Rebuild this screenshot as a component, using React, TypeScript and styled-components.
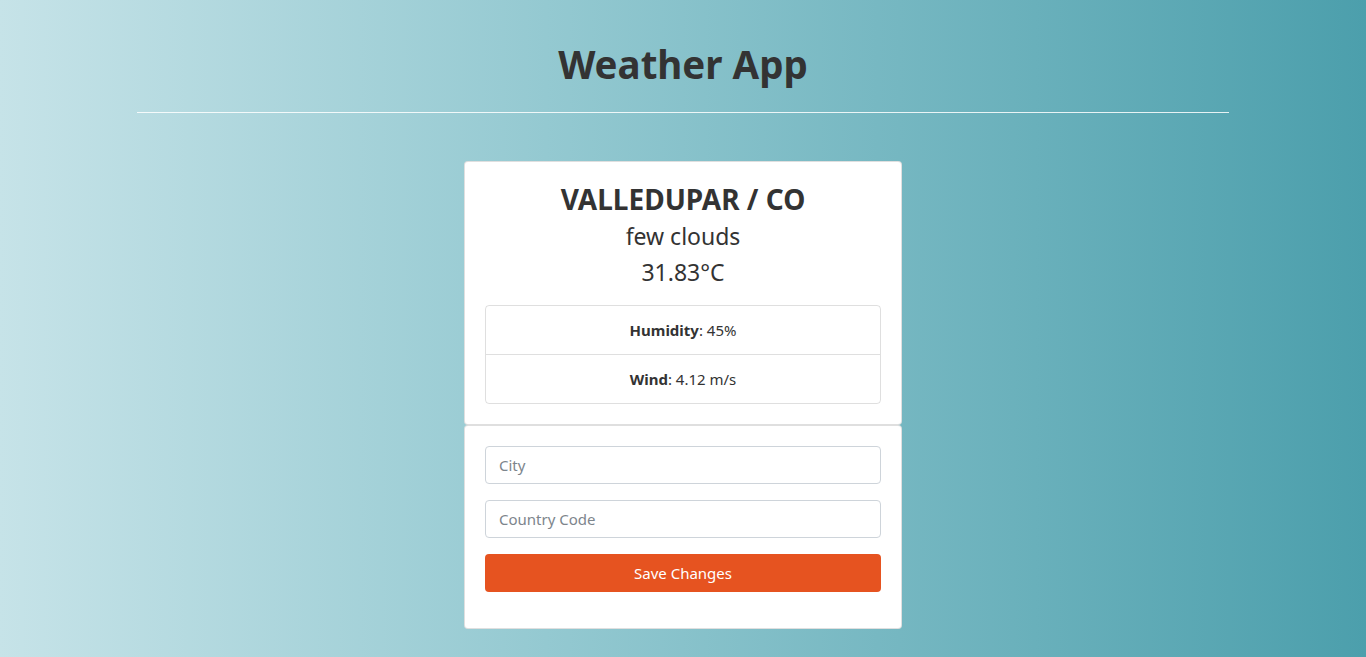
import React from "react";
import styled, { createGlobalStyle } from "styled-components";

const Global = createGlobalStyle`
  * { box-sizing: border-box; }
  body {
    margin: 0;
    font-family: "Noto Sans", "Open Sans", sans-serif;
    color: #333;
  }
`;

const Page = styled.div`
  min-height: 657px;
  background: linear-gradient(to right, #c6e3e8 0%, #94c9d1 40%, #4c9fac 100%);
  padding-top: 40px;
  padding-bottom: 28px;
`;

const Container = styled.div`
  width: 1092px;
  margin: 0 auto;
`;

const Title = styled.h1`
  margin: 0 0 8px;
  font-size: 38.5px;
  line-height: 48px;
  font-weight: 700;
  text-align: center;
  color: #333;
`;

const Rule = styled.hr`
  margin: 24px 0 48px;
  border: 0;
  border-top: 1px solid rgba(255, 255, 255, 0.85);
`;

const Column = styled.div`
  width: 438px;
  margin: 0 auto;
  display: flex;
  flex-direction: column;
`;

const Card = styled.div`
  background: #fff;
  border: 1px solid rgba(0, 0, 0, 0.125);
  border-radius: 4px;
  padding: 20px;
`;

const City = styled.h3`
  margin: 0 0 4px;
  font-size: 28px;
  line-height: 34px;
  font-weight: 700;
  text-align: center;
  color: #333;
`;

const Line = styled.p<{ $mb: number }>`
  margin: 0 0 ${(p) => p.$mb}px;
  font-size: 23px;
  line-height: 32px;
  text-align: center;
  color: #333;
`;

const List = styled.ul`
  list-style: none;
  margin: 0;
  padding: 0;
  border: 1px solid rgba(0, 0, 0, 0.125);
  border-radius: 4px;
`;

const Item = styled.li`
  padding: 12px 20px;
  font-size: 15px;
  line-height: 24px;
  text-align: center;
  color: #333;
  & + & {
    border-top: 1px solid rgba(0, 0, 0, 0.125);
  }
  b { font-weight: 700; }
`;

const Form = styled.form`
  display: flex;
  flex-direction: column;
  gap: 16px;
  padding-bottom: 16px;
`;

const Input = styled.input`
  height: 38px;
  width: 100%;
  padding: 6px 13px;
  font-family: inherit;
  font-size: 15px;
  border: 1px solid #ced4da;
  border-radius: 4px;
  color: #495057;
  background: #fff;
  &::placeholder { color: #7d858c; }
`;

const Button = styled.button`
  height: 38px;
  width: 100%;
  border: 0;
  border-radius: 4px;
  background: #e65320;
  color: #fff;
  font-family: inherit;
  font-size: 15px;
  cursor: pointer;
`;

export default function App() {
  return (
    <>
      <Global />
      <Page>
        <Container>
          <Title>Weather App</Title>
          <Rule />
          <Column>
            <Card>
              <City>VALLEDUPAR / CO</City>
              <Line $mb={4}>few clouds</Line>
              <Line $mb={17}>31.83°C</Line>
              <List>
                <Item><b>Humidity</b>: 45%</Item>
                <Item><b>Wind</b>: 4.12 m/s</Item>
              </List>
            </Card>
            <Card>
              <Form onSubmit={(e) => e.preventDefault()}>
                <Input placeholder="City" />
                <Input placeholder="Country Code" />
                <Button type="submit">Save Changes</Button>
              </Form>
            </Card>
          </Column>
        </Container>
      </Page>
    </>
  );
}
